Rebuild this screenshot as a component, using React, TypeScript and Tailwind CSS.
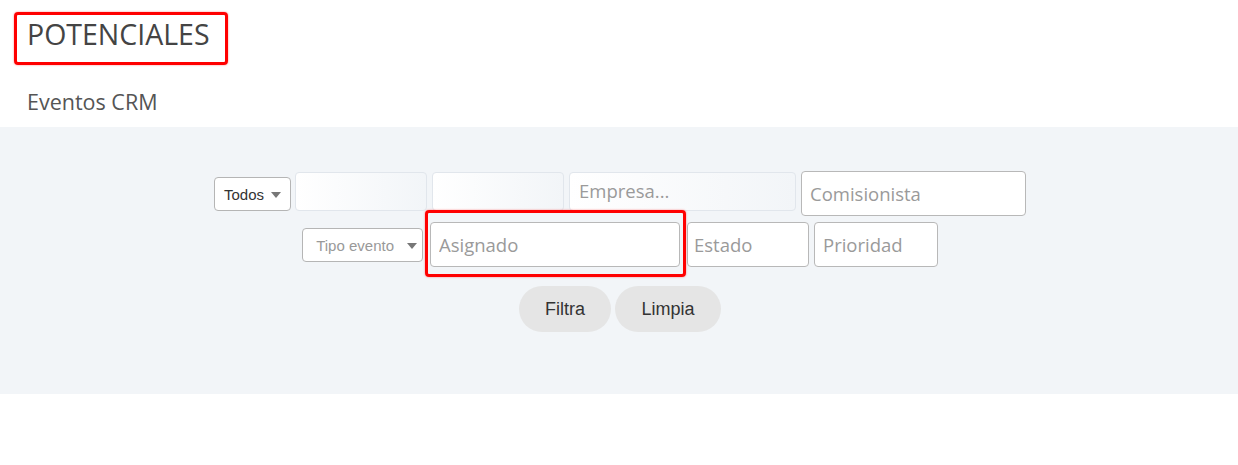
import React from 'react';

const Caret = ({ className }: { className?: string }) => (
    <svg width="10" height="6" viewBox="0 0 10 6" className={className}>
        <path d="M0 0 L10 0 L5 6 Z" fill="currentColor" />
    </svg>
);

const App = () => {
    return (
        <div className="min-h-screen bg-white font-['Open_Sans',sans-serif]">
            {/* Page heading */}
            <div className="pl-[27px] pt-[15px]">
                <div className="relative inline-block">
                    <h1 className="text-[28.5px] leading-[38px] text-[#444] font-normal">POTENCIALES</h1>
                    <div className="absolute left-[-13px] top-[-3px] w-[214px] h-[53px] border-[3px] border-[#f00] rounded-[4px] shadow-[0_0_2px_rgba(255,0,0,0.5)]" />
                </div>
            </div>
            <h2 className="pl-[27px] mt-[34px] text-[21.5px] leading-[29px] text-[#555] font-normal">Eventos CRM</h2>

            {/* Filter panel */}
            <div className="mt-[11px] h-[267px] bg-[#f2f5f8] pt-[44px] font-['Liberation_Sans',Arial,sans-serif]">
                {/* Row 1 */}
                <div className="flex justify-center items-start pl-[2px]">
                    <button className="mt-[6px] w-[77px] h-[34px] flex items-center justify-center gap-[7px] pt-[2px] bg-white border border-[#b5b5b5] rounded-[4px] text-[15px] text-[#333]">
                        Todos
                        <Caret className="text-[#777]" />
                    </button>
                    <input className="ml-[4px] mt-[1px] w-[132px] h-[39px] rounded-[4px] border border-[#e1e6ec] bg-gradient-to-r from-white to-[#f2f5f8] outline-none" />
                    <input className="ml-[5px] mt-[1px] w-[132px] h-[39px] rounded-[4px] border border-[#e1e6ec] bg-gradient-to-r from-white to-[#f2f5f8] outline-none" />
                    <input
                        placeholder="Empresa..."
                        className="ml-[5px] mt-[1px] w-[227px] h-[39px] rounded-[4px] border border-[#e1e6ec] bg-gradient-to-r from-white to-[#f2f5f8] pl-[9px] pb-[3px] text-[18.5px] font-['Open_Sans',sans-serif] placeholder:text-[#9a9a9a] outline-none"
                    />
                    <input
                        placeholder="Comisionista"
                        className="ml-[5px] w-[225px] h-[45px] rounded-[4px] border border-[#b8b8b8] bg-white pl-[8px] text-[18.5px] font-['Open_Sans',sans-serif] placeholder:text-[#9a9a9a] outline-none"
                    />
                </div>

                {/* Row 2 */}
                <div className="mt-[6px] flex justify-center items-center pl-[2px]">
                    <button className="w-[121px] h-[34px] flex items-center justify-end pr-[5px] pt-[3px] gap-[13px] bg-white border border-[#b5b5b5] rounded-[4px] text-[15px] text-[#999]">
                        Tipo evento
                        <Caret className="text-[#777]" />
                    </button>
                    <div className="relative ml-[7px]">
                        <input
                            placeholder="Asignado"
                            className="block w-[250px] h-[45px] rounded-[4px] border border-[#b8b8b8] bg-white pl-[8px] text-[18.5px] font-['Open_Sans',sans-serif] placeholder:text-[#9a9a9a] outline-none"
                        />
                        <div className="absolute left-[-5px] top-[-12px] w-[261px] h-[67px] border-[3px] border-[#f00] rounded-[4px] shadow-[0_0_2px_rgba(255,0,0,0.5)] pointer-events-none" />
                    </div>
                    <input
                        placeholder="Estado"
                        className="ml-[7px] w-[122px] h-[45px] rounded-[4px] border border-[#b8b8b8] bg-white pl-[6px] text-[18.5px] font-['Open_Sans',sans-serif] placeholder:text-[#9a9a9a] outline-none"
                    />
                    <input
                        placeholder="Prioridad"
                        className="ml-[5px] w-[124px] h-[45px] rounded-[4px] border border-[#b8b8b8] bg-white pl-[8px] text-[18.5px] font-['Open_Sans',sans-serif] placeholder:text-[#9a9a9a] outline-none"
                    />
                </div>

                {/* Actions */}
                <div className="mt-[19px] flex justify-center gap-[4px] pl-[2px]">
                    <button className="w-[92px] h-[46px] rounded-full bg-[#e5e5e5] text-[18px] text-[#333]">Filtra</button>
                    <button className="w-[106px] h-[46px] rounded-full bg-[#e5e5e5] text-[18px] text-[#333]">Limpia</button>
                </div>
            </div>
        </div>
    );
};

export default App;
